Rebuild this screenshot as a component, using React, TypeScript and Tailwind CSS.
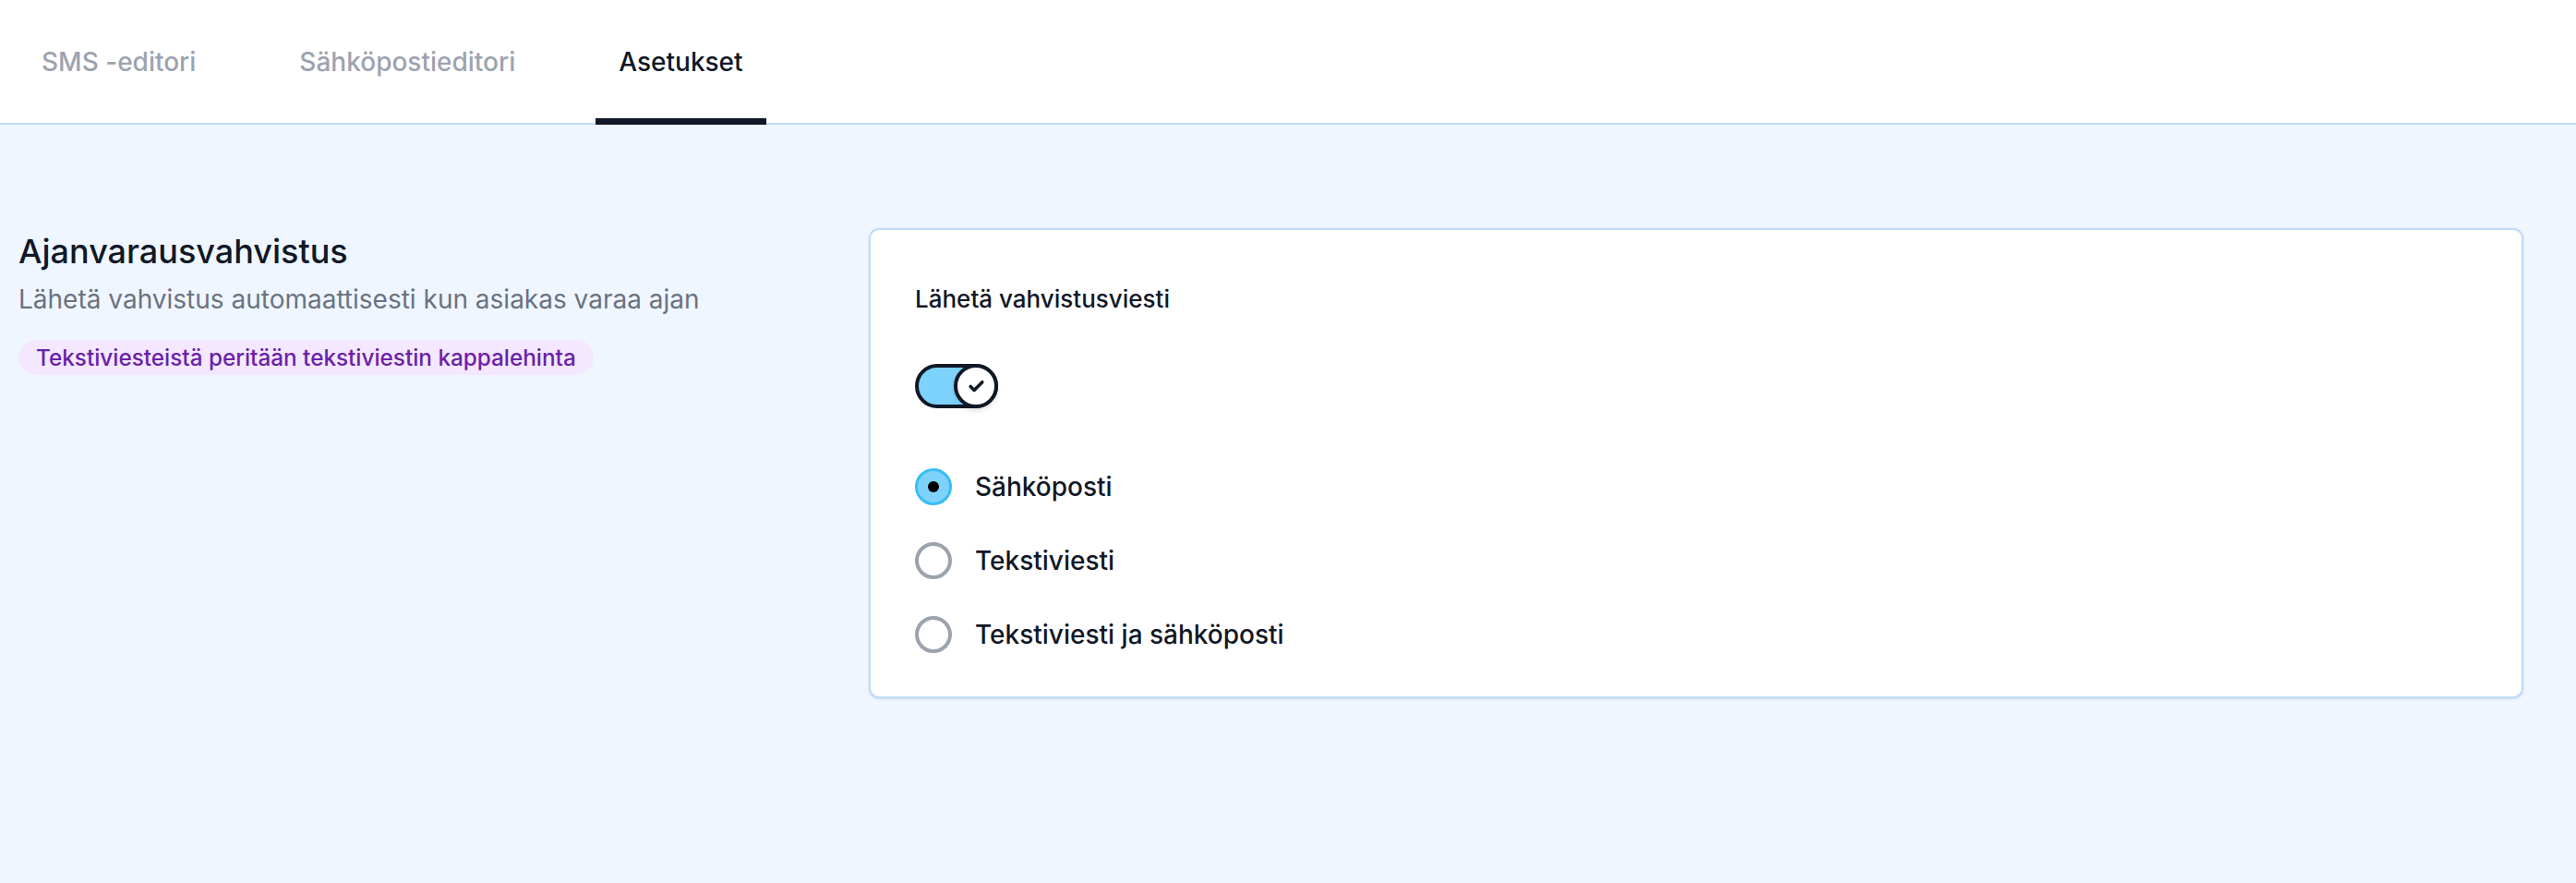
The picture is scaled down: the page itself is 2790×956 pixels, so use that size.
import React from "react";

function Tab({ label, active }: { label: string; active?: boolean }) {
  return (
    <div className="relative h-full flex items-center px-[25px]">
      <span
        className={
          "text-[28px] font-medium " +
          (active ? "text-[#111827]" : "text-[#9ca3af]")
        }
      >
        {label}
      </span>
      {active && (
        <div className="absolute left-0 right-0 bottom-[-2px] h-[7px] bg-[#111827]" />
      )}
    </div>
  );
}

function Radio({ label, checked }: { label: string; checked?: boolean }) {
  return (
    <div className="flex items-center h-[40px] gap-[25px]">
      {checked ? (
        <div className="w-[40px] h-[40px] rounded-full bg-[#7dd3fc] border-[3px] border-[#38bdf8] flex items-center justify-center">
          <div className="w-[12px] h-[12px] rounded-full bg-black" />
        </div>
      ) : (
        <div className="w-[40px] h-[40px] rounded-full bg-white border-[4px] border-[#9ca3af]" />
      )}
      <span className="text-[28px] font-medium text-[#111827] leading-[40px]">{label}</span>
    </div>
  );
}

export default function App() {
  return (
    <div className="min-h-screen bg-[#eff6ff] font-['Inter',sans-serif]">
      <div className="h-[135px] bg-white border-b-2 border-[#bfdbfe] flex items-stretch pl-[20px] pr-[19px] gap-[62px]">
        <Tab label="SMS -editori" />
        <Tab label="Sähköpostieditori" />
        <Tab label="Asetukset" active />
      </div>
      <div className="flex pl-[20px] pr-[57px] pt-[112px]">
        <div className="w-[921px] flex flex-col items-start">
          <h2 className="text-[36px] leading-[50px] font-medium text-[#111827]">
            Ajanvarausvahvistus
          </h2>
          <p className="mt-[7px] text-[28px] leading-[40px] text-[#6b7280]">
            Lähetä vahvistus automaattisesti kun asiakas varaa ajan
          </p>
          <span className="mt-[24px] h-[38px] flex items-center rounded-full bg-[#f3e8ff] px-[19px] text-[24.3px] font-medium text-[#6b21a8]">
            Tekstiviesteistä peritään tekstiviestin kappalehinta
          </span>
        </div>
        <div className="flex-1 bg-white border-2 border-[#bfdbfe] rounded-[11px] shadow-sm pt-[57px] pb-[47px] px-[48px] flex flex-col items-start">
          <h3 className="text-[26px] leading-[36px] font-medium text-[#111827]">
            Lähetä vahvistusviesti
          </h3>
          <div className="mt-[52px] relative w-[90px] h-[48px] rounded-full bg-[#7dd3fc] border-[4px] border-[#111827]">
            <div className="absolute right-[-4px] top-[-4px] w-[48px] h-[48px] rounded-full bg-white border-[4px] border-[#111827] shadow-md flex items-center justify-center">
              <svg width="19" height="19" viewBox="0 0 24 24" fill="none" stroke="#111827" strokeWidth="4.5" strokeLinecap="round" strokeLinejoin="round">
                <path d="M20 6 9 17l-5-5" />
              </svg>
            </div>
          </div>
          <div className="mt-[65px] flex flex-col gap-[40px]">
            <Radio label="Sähköposti" checked />
            <Radio label="Tekstiviesti" />
            <Radio label="Tekstiviesti ja sähköposti" />
          </div>
        </div>
      </div>
    </div>
  );
}
